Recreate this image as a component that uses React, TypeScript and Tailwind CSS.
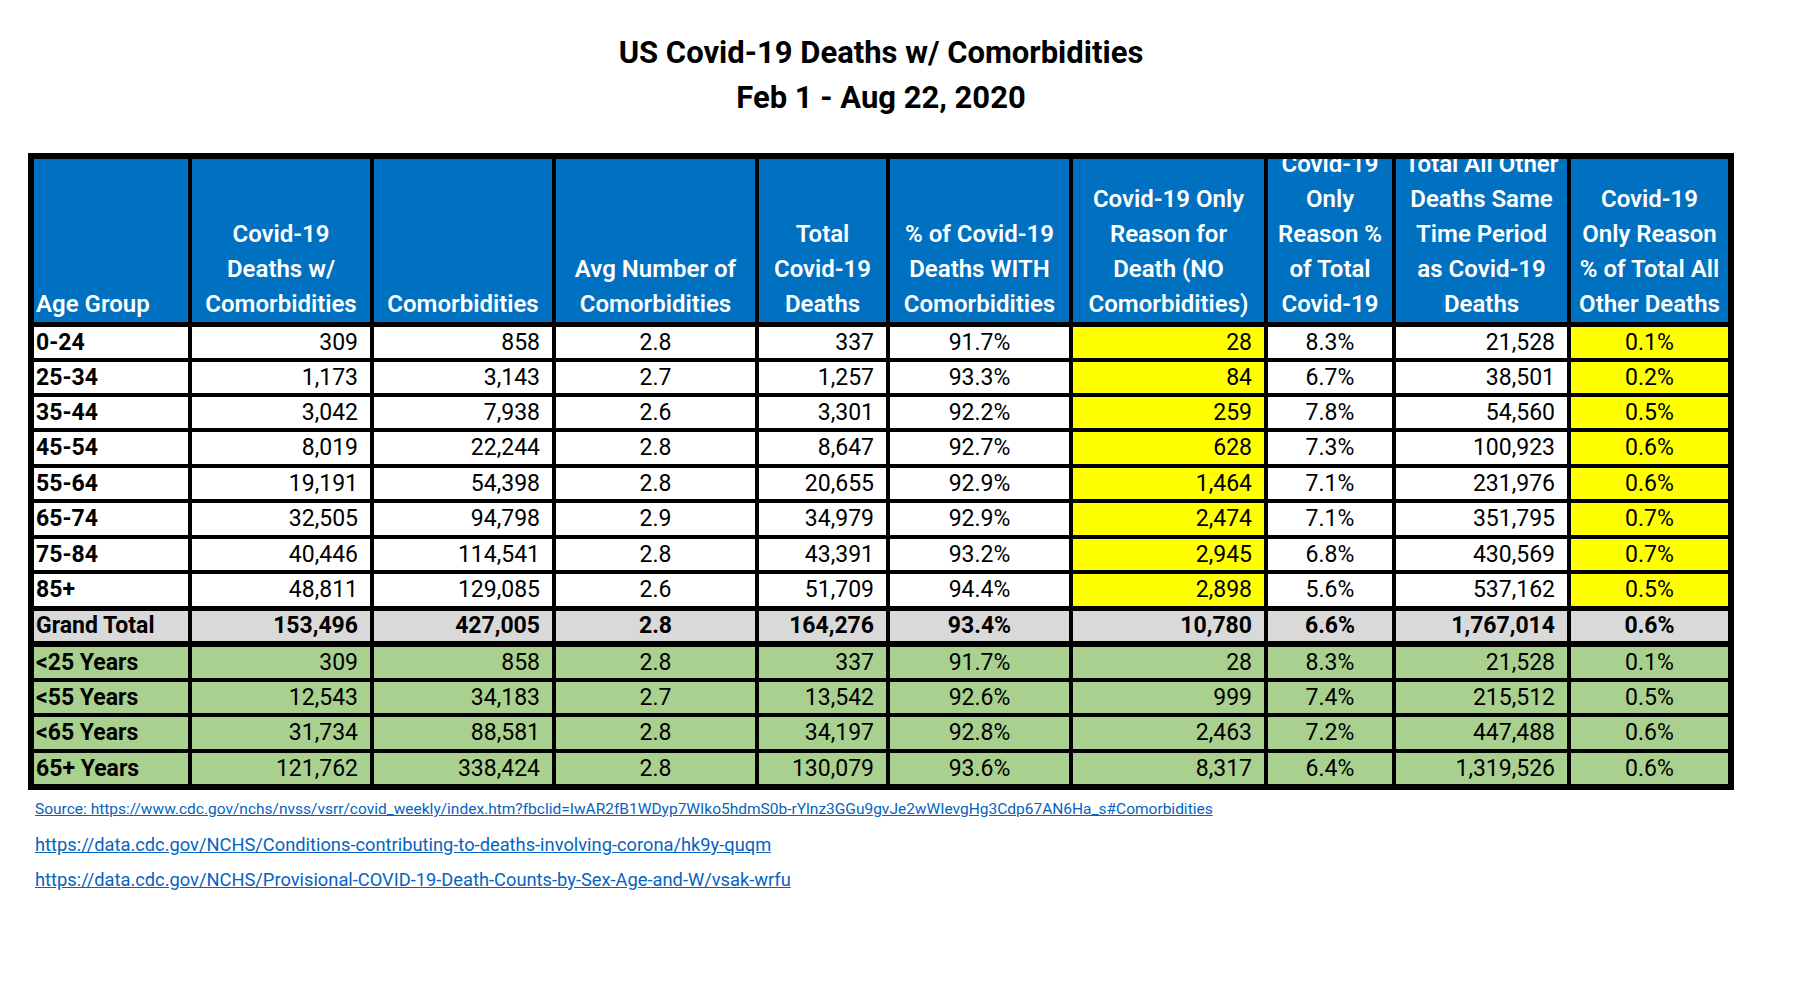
const COLS =
  "grid grid-rows-1 grid-cols-[154px_178px_178px_199px_127px_179px_191px_124px_171px_157px] gap-x-[4px]";

const ALIGN = [
  "justify-start pl-[2px]",
  "justify-end pr-[12px]",
  "justify-end pr-[12px]",
  "justify-center",
  "justify-end pr-[12px]",
  "justify-center",
  "justify-end pr-[12px]",
  "justify-center",
  "justify-end pr-[12px]",
  "justify-center",
];

const headers: string[][] = [
  ["Age Group"],
  ["Covid-19", "Deaths w/", "Comorbidities"],
  ["Comorbidities"],
  ["Avg Number of", "Comorbidities"],
  ["Total", "Covid-19", "Deaths"],
  ["% of Covid-19", "Deaths WITH", "Comorbidities"],
  ["Covid-19 Only", "Reason for", "Death (NO", "Comorbidities)"],
  ["Covid-19", "Only", "Reason %", "of Total", "Covid-19"],
  ["Total All Other", "Deaths Same", "Time Period", "as Covid-19", "Deaths"],
  ["Covid-19", "Only Reason", "% of Total All", "Other Deaths"],
];

const ageRows: { cells: string[]; h: string }[] = [
  { h: "h-[31px]", cells: ["0-24", "309", "858", "2.8", "337", "91.7%", "28", "8.3%", "21,528", "0.1%"] },
  { h: "h-[31px]", cells: ["25-34", "1,173", "3,143", "2.7", "1,257", "93.3%", "84", "6.7%", "38,501", "0.2%"] },
  { h: "h-[31px]", cells: ["35-44", "3,042", "7,938", "2.6", "3,301", "92.2%", "259", "7.8%", "54,560", "0.5%"] },
  { h: "h-[32px]", cells: ["45-54", "8,019", "22,244", "2.8", "8,647", "92.7%", "628", "7.3%", "100,923", "0.6%"] },
  { h: "h-[31px]", cells: ["55-64", "19,191", "54,398", "2.8", "20,655", "92.9%", "1,464", "7.1%", "231,976", "0.6%"] },
  { h: "h-[32px]", cells: ["65-74", "32,505", "94,798", "2.9", "34,979", "92.9%", "2,474", "7.1%", "351,795", "0.7%"] },
  { h: "h-[31px]", cells: ["75-84", "40,446", "114,541", "2.8", "43,391", "93.2%", "2,945", "6.8%", "430,569", "0.7%"] },
  { h: "h-[32px]", cells: ["85+", "48,811", "129,085", "2.6", "51,709", "94.4%", "2,898", "5.6%", "537,162", "0.5%"] },
];

const grandTotal = ["Grand Total", "153,496", "427,005", "2.8", "164,276", "93.4%", "10,780", "6.6%", "1,767,014", "0.6%"];

const yearRows: { cells: string[]; h: string }[] = [
  { h: "h-[31px]", cells: ["<25 Years", "309", "858", "2.8", "337", "91.7%", "28", "8.3%", "21,528", "0.1%"] },
  { h: "h-[31px]", cells: ["<55 Years", "12,543", "34,183", "2.7", "13,542", "92.6%", "999", "7.4%", "215,512", "0.5%"] },
  { h: "h-[32px]", cells: ["<65 Years", "31,734", "88,581", "2.8", "34,197", "92.8%", "2,463", "7.2%", "447,488", "0.6%"] },
  { h: "h-[31px]", cells: ["65+ Years", "121,762", "338,424", "2.8", "130,079", "93.6%", "8,317", "6.4%", "1,319,526", "0.6%"] },
];

function Cell({ text, i, bg, bold }: { text: string; i: number; bg: string; bold: boolean }) {
  return (
    <div
      className={`flex min-h-0 items-center overflow-hidden whitespace-nowrap leading-[28px] ${ALIGN[i]} ${bg} ${
        bold ? "font-bold" : ""
      }`}
    >
      {text}
    </div>
  );
}

export default function App() {
  return (
    <div className="min-h-[1000px] w-[1800px] bg-white font-['Roboto',sans-serif] text-black">
      <div className="ml-[28px] w-[1706px] pt-[30px] text-center text-[31px] font-bold leading-[45px]">
        <div>US Covid-19 Deaths w/ Comorbidities</div>
        <div>Feb 1 - Aug 22, 2020</div>
      </div>

      <div className="ml-[28px] mt-[33px] flex w-[1706px] flex-col bg-black p-[6px] text-[23px]">
        <div className={`${COLS} h-[163px]`}>
          {headers.map((lines, i) => (
            <div
              key={i}
              className={`flex min-h-0 flex-col justify-end overflow-hidden bg-[#0070c0] text-[24px] font-semibold leading-[35px] text-white ${
                i === 0 ? "items-start pl-[2px]" : "items-center"
              }`}
            >
              {lines.map((l) => (
                <div key={l} className="shrink-0 whitespace-nowrap">
                  {l}
                </div>
              ))}
            </div>
          ))}
        </div>

        {ageRows.map((r, ri) => (
          <div key={r.cells[0]} className={`${COLS} ${r.h} ${ri === 0 ? "mt-[5px]" : "mt-[4px]"}`}>
            {r.cells.map((c, i) => (
              <Cell
                key={i}
                text={c}
                i={i}
                bold={i === 0}
                bg={i === 6 || i === 9 ? "bg-[#ffff00]" : "bg-white"}
              />
            ))}
          </div>
        ))}

        <div className={`${COLS} mt-[5px] h-[30px]`}>
          {grandTotal.map((c, i) => (
            <Cell key={i} text={c} i={i} bold bg="bg-[#d9d9d9]" />
          ))}
        </div>

        {yearRows.map((r, ri) => (
          <div key={r.cells[0]} className={`${COLS} ${r.h} ${ri === 0 ? "mt-[6px]" : "mt-[4px]"}`}>
            {r.cells.map((c, i) => (
              <Cell key={i} text={c} i={i} bold={i === 0} bg="bg-[#a9d08e]" />
            ))}
          </div>
        ))}
      </div>

      <div className="ml-[35px] mt-[2px] flex flex-col items-start text-[#0563c1]">
        <a className="text-[15.5px] leading-[35px] underline" href="#">
          Source: https://www.cdc.gov/nchs/nvss/vsrr/covid_weekly/index.htm?fbclid=IwAR2fB1WDyp7WIko5hdmS0b-rYlnz3GGu9gvJe2wWIevgHg3Cdp67AN6Ha_s#Comorbidities
        </a>
        <a className="text-[18.3px] leading-[35px] underline" href="#">
          https://data.cdc.gov/NCHS/Conditions-contributing-to-deaths-involving-corona/hk9y-quqm
        </a>
        <a className="text-[18.3px] leading-[35px] underline" href="#">
          https://data.cdc.gov/NCHS/Provisional-COVID-19-Death-Counts-by-Sex-Age-and-W/vsak-wrfu
        </a>
      </div>
    </div>
  );
}
